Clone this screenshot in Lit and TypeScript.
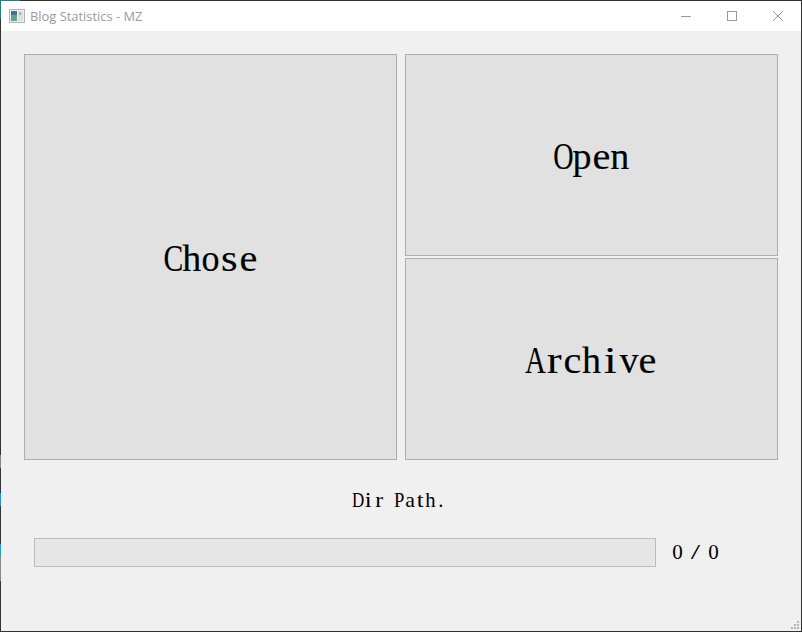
import { LitElement, html, css } from "lit";
import { customElement } from "lit/decorators.js";

const FIT: Record<string, number> = {
  C: 0.78, h: 1, o: 0.95, s: 1.12, e: 1.06, O: 0.74, p: 1, n: 1, A: 0.76, r: 1.15,
  c: 1.06, i: 1.2, v: 1, D: 0.82, t: 1.2, a: 1.06, P: 0.9, "/": 1.6,
};

const cells = (text: string) =>
  [...text].map(
    (c) => html`<span class="cell" style="transform: scaleX(${FIT[c] ?? 1})">${c === " " ? "\u00a0" : c}</span>`
  );

@customElement("app-root")
export class AppRoot extends LitElement {
  static styles = css`
    :host { display: block; width: 802px; height: 632px; }
    .win { box-sizing: border-box; width: 802px; height: 632px; display: flex; flex-direction: column; border: 1px solid #333; background: #f0f0f0; position: relative; }
    .win::before { content: ""; position: absolute; left: -1px; top: -1px; width: 1px; height: 632px;
      background: linear-gradient(180deg, #1f7f86 0 3%, #333 3% 72%, #7a8a9a 72% 74%, #333 74% 78%, #2a8fd0 78% 80%, #333 80% 86%, #2aa0c0 86% 88%, #888 88% 92%, #333 92%); }
    .win::after { content: ""; position: absolute; left: -1px; top: -1px; width: 20px; height: 1px; background: #1f7f86; }
    .title { height: 30px; flex: none; background: #fff; display: flex; align-items: center; padding-left: 8px; color: #9a9aa4; font: 12.9px "Open Sans", "Noto Sans", sans-serif; }
    .appicon { width: 16px; height: 16px; margin-right: 5px; flex: none; }
    .name { flex: 1; }
    .ctl { width: 46px; height: 30px; display: flex; align-items: center; justify-content: center; flex: none; }
    .ctl svg { width: 12px; height: 12px; }
    .body { flex: 1; display: flex; flex-direction: column; padding: 23px 23px 0; }
    .grid { display: grid; grid-template-columns: 373px 373px; grid-template-rows: 202px 202px; column-gap: 8px; row-gap: 2px; }
    .btn { box-sizing: border-box; background: #e1e1e1; border: 1px solid #adadad; display: flex; align-items: center; justify-content: center; padding-top: 1px; color: #000; font: 38px/1 "Liberation Serif", serif; -webkit-text-stroke: 0.15px #000; --cw: 18.8px; }
    .tall { grid-row: 1 / 3; }
    .cell { display: inline-flex; justify-content: center; width: var(--cw); white-space: pre; }
    .path { margin-top: 28px; height: 24px; display: flex; justify-content: center; padding-right: 3px; font: 20.7px/24px "Liberation Serif", serif; color: #000; --cw: 10.35px; }
    .prog { display: flex; align-items: center; margin-top: 26px; padding-left: 10px; }
    .bar { box-sizing: border-box; width: 622px; height: 29px; background: #e6e6e6; border: 1px solid #bcbcbc; flex: none; }
    .count { margin-left: 17px; margin-top: -2px; display: flex; font: 21px/24px "Liberation Serif", serif; color: #000; --cw: 9px; }
    .grip { position: absolute; right: 1px; bottom: 1px; width: 9px; height: 9px; }
  `;

  render() {
    return html`
      <div class="win">
        <div class="title">
          <svg class="appicon" viewBox="0 0 16 16">
            <rect x="0.5" y="1.5" width="15" height="13" fill="#f0f0f0" stroke="#b4b4b4"/>
            <rect x="2" y="3" width="6" height="10" fill="#5fa394"/>
            <rect x="2" y="3" width="6" height="4" fill="#47708f"/>
            <rect x="9" y="3" width="5" height="10" fill="#dcdfe0"/>
            <rect x="10" y="4" width="2" height="3" fill="#aab0b4"/>
          </svg>
          <span class="name">Blog Statistics - MZ</span>
          <div class="ctl"><svg viewBox="0 0 12 12"><path d="M1 6.5H11" stroke="#999" fill="none"/></svg></div>
          <div class="ctl"><svg viewBox="0 0 12 12"><rect x="1.5" y="1.5" width="9" height="9" stroke="#999" fill="none"/></svg></div>
          <div class="ctl"><svg viewBox="0 0 12 12"><path d="M1 1L11 11M11 1L1 11" stroke="#999" fill="none"/></svg></div>
        </div>
        <div class="body">
          <div class="grid">
            <div class="btn tall">${cells("Chose")}</div>
            <div class="btn">${cells("Open")}</div>
            <div class="btn">${cells("Archive")}</div>
          </div>
          <div class="path">${cells("Dir Path.")}</div>
          <div class="prog">
            <div class="bar"></div>
            <div class="count">${cells("0 / 0")}</div>
          </div>
        </div>
        <svg class="grip" viewBox="0 0 9 9" fill="#b5b5b5">
          <rect x="6" y="0" width="2" height="2"/>
          <rect x="3" y="3" width="2" height="2"/><rect x="6" y="3" width="2" height="2"/>
          <rect x="0" y="6" width="2" height="2"/><rect x="3" y="6" width="2" height="2"/><rect x="6" y="6" width="2" height="2"/>
        </svg>
      </div>
    `;
  }
}
